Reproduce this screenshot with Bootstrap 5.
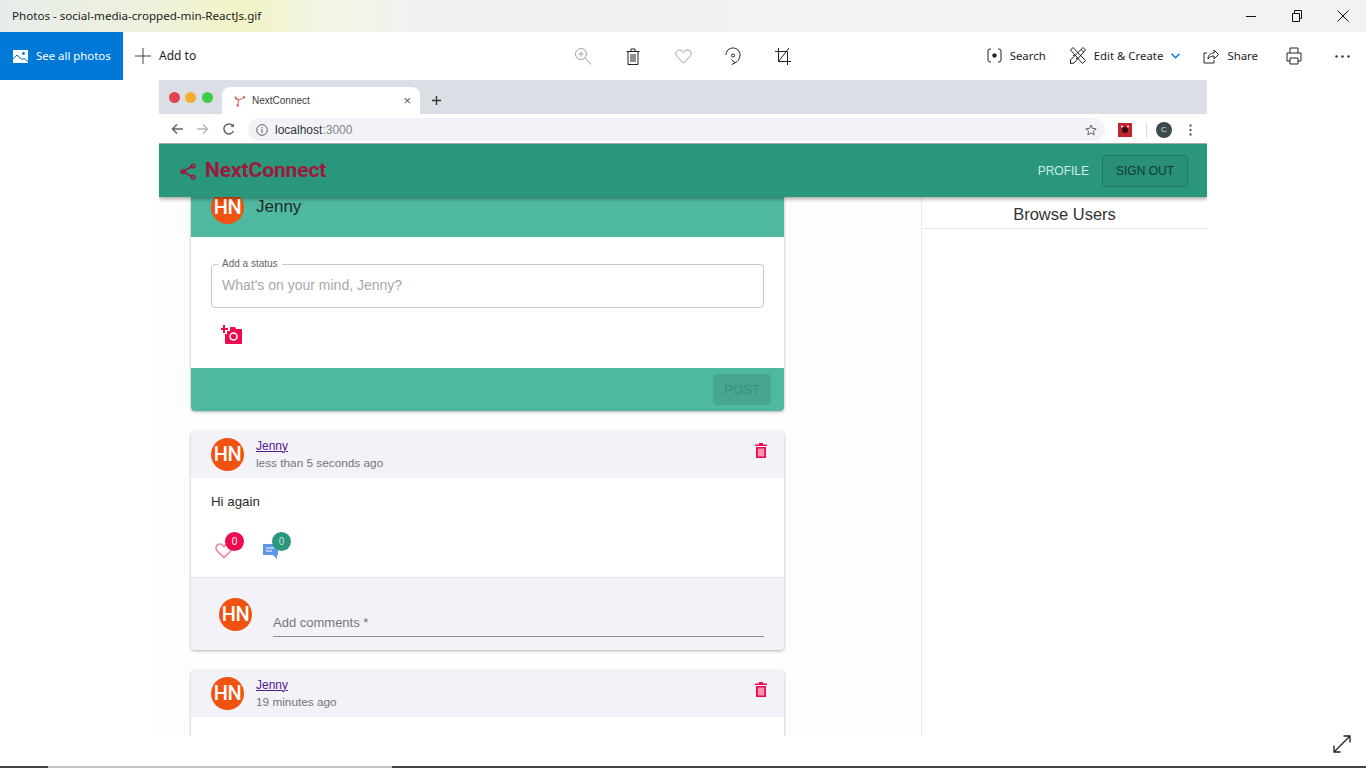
<!DOCTYPE html>
<html lang="en">
<head>
<meta charset="utf-8">
<title>Photos - social-media-cropped-min-ReactJs.gif</title>
<link href="https://cdn.jsdelivr.net/npm/bootstrap@5.3.0/dist/css/bootstrap.min.css" rel="stylesheet">
<style>
html,body{height:100%;overflow:hidden;background:#fff}
.app-shell{height:768px;width:1366px;font-family:"Noto Sans","Open Sans",sans-serif;color:#1c1c1c}
.title-strip{height:32px;background:linear-gradient(90deg,#e6ecea 0,#eef1dc 150px,#f2f4c6 245px,#f3f4e4 320px,#f1f1f1 420px,#f2f2f2 100%);font-size:11.6px;padding-left:12px}
.win-btn{width:46px;height:32px;display:flex;align-items:center;justify-content:center}
.tool-strip{height:48px;font-size:11.4px}
.tool-side{flex:1 1 0;min-width:0}
.see-all{width:123px;height:48px;background:#0078d7;color:#fff;padding-left:13px;gap:8px}
.add-to{margin-left:12px;gap:8px;font-size:12px}
.tool-cell{width:50px;height:48px;display:flex;align-items:center;justify-content:center}
.r-search{gap:8px;margin-right:24px}
.r-edit{gap:8px;margin-right:23px}
.r-share{gap:8px;margin-right:28px}
.r-print{margin-right:33px}
.r-dots{margin-right:16px}
.stage{height:656px;padding-left:159px}
.browser{width:1048px;height:656px;overflow:hidden;font-family:"Liberation Sans",Arial,sans-serif;background:#fdfdfd}
.tab-strip{height:34px;background:#dcdee6;padding:7px 0 0 10px}
.traffic{width:11px;height:11px;border-radius:50%;margin-top:5px}
.t-red{background:#e0444f}.t-yellow{background:#f2ae32;margin-left:5px}.t-green{background:#3fce4c;margin-left:6px}
.chrome-tab{width:198px;height:27px;background:#fff;border-radius:8px 8px 0 0;margin-left:9px;padding:0 9px 0 12px;font-size:10px;color:#3c4043;gap:7px}
.tab-close{margin-left:auto;font-size:13px;line-height:1;color:#555}
.tab-plus{margin-left:11px}
.url-strip{height:30px;background:#fff;border-bottom:1px solid #a9b0b0;padding:4px 0 2px 12px}
.url-icons{gap:14px;width:77px;padding-top:5px}
.omni{width:857px;height:23px;background:#f2f3f8;border-radius:12px;font-size:12px;padding:0 8px;color:#80868b;gap:7px}
.omni b{font-weight:400;color:#30363a}
.url-end{margin-left:13px;padding-top:4px}
.ext-sep{width:1px;height:16px;background:#dcdcdc;margin:0 9px 0 14px}
.c-avatar{width:16px;height:16px;border-radius:50%;background:#3c4a4e;color:#ddd;font-size:8px;line-height:16px;text-align:center;margin-right:17px}
.site-nav{height:53px;background:#2a967c;position:relative;z-index:2;box-shadow:0 2px 4px rgba(0,0,0,.35);padding:0 19px 0 21px}
.brand-mark{font-family:Roboto,"Liberation Sans",sans-serif;font-weight:700;font-size:21px;color:#9c1a3c;gap:9px;letter-spacing:-.1px;padding-top:1px}
.nav-link-a{font-size:12px;color:#c9efe2;margin-right:13px;padding-top:1px}
.sign-out{width:86px;height:32px;border:1px solid #1f7a64;border-radius:4px;background:#2a8f77;color:#123a33;font-size:12px;padding:1px 0 0;font-family:inherit;--bs-btn-hover-bg:#2a8f77}
.content-row{margin-top:-20px;flex:1 1 0;min-height:0}
.feed{width:762px;padding-left:32px;overflow:hidden}
.side-col{width:286px;border-left:1px solid #ebebeb;padding-top:20px;background:#fff}
.side-head{height:32px;font-size:16.500px;color:#333;border-bottom:1px solid #e4e4e4;line-height:35px;text-align:center}
.post-box{width:593px;margin-bottom:20px;border:0;border-radius:4px;box-shadow:0 1px 3px rgba(0,0,0,.3);background:#fff}
.top-head{height:60px;background:#4fb9a0;padding:0 20px;gap:12px;font-size:17px;color:#1d2a28}
.top-body{height:131px;padding:27px 20px 0}
.status-box{height:44px;border:1px solid #c6c6c6;border-radius:4px;position:relative;padding:0 10px 2px;font-size:14px;color:#a9a9a9}
.status-label{position:absolute;left:6px;top:-7px;font-size:10px;line-height:12px;background:#fff;padding:0 4px;color:#666}
.cam-wrap{margin:14px 0 0 10px;height:22px}
.top-foot{height:43px;background:#4fb9a0;border-radius:0 0 4px 4px;padding:6px 13px 6px 0}
.post-btn{width:58px;height:31px;background:#46a68f;border:0;border-radius:4px;color:#3d8f7c;font-size:13px;padding:0;font-family:inherit}
.post-head{height:47px;background:#f3f2f8;padding:0 17px 0 20px;gap:12px;border-radius:4px 4px 0 0}
.who{line-height:17px;font-size:11.800px;color:#757575}
.who a{color:#551a8b;font-size:12px;display:block}
.hn-avatar{width:33px;height:33px;border-radius:50%;background:#f0520f;color:#fff;font-family:Roboto,sans-serif;font-weight:500;font-size:20px;line-height:33px;text-align:center;letter-spacing:-.5px;flex:none}
.bin-ic{margin-top:-8px}
.post-body{padding:15px 20px 0;font-size:13.3px;color:#2b2b2b;height:99px}
.post-body p{margin:0;line-height:17px}
.react-row{margin:30px 0 0 4px;gap:27px}
.react-item{position:relative;width:20px;height:19px}
.count-pill{position:absolute;right:-9px;top:-8px;width:19px;height:19px;border-radius:50%;color:#fff;font-size:10px;line-height:19px;text-align:center;padding:0}
.pill-red{background:#ee0a4f}.pill-teal{background:#2a967c;color:#bfe6da;right:-9px}
.comment-zone{height:73px;background:#f3f2f8;border-top:1px solid #e4e3ea;padding:20px 20px 0 28px;gap:21px;border-radius:0 0 4px 4px}
.comment-input{flex:1 1 0;height:39px;border-bottom:1px solid #8d8d93;font-size:13px;color:#777;padding-top:15px;line-height:20px}
.progress-foot{height:30px;padding-right:15px}
.expand-ic{margin-top:-1px}
.seek-line{height:2px}
.seek-a{width:48px;background:#444}.seek-b{width:344px;background:#c4c4c4}.seek-c{flex:1 1 0;background:#444}
</style>
</head>
<body>
<div class="app-shell d-flex flex-column">
  <div class="title-strip d-flex align-items-center justify-content-between">
    <span>Photos - social-media-cropped-min-ReactJs.gif</span>
    <div class="d-flex">
      <div class="win-btn"><svg width="12" height="12" viewBox="0 0 12 12"><path d="M1 6.5h10" stroke="#111" fill="none"/></svg></div>
      <div class="win-btn"><svg width="12" height="12" viewBox="0 0 12 12"><path d="M1.5 3.5h7v8h-7zM3.5 3.5v-3h7v8h-2" stroke="#111" fill="none"/></svg></div>
      <div class="win-btn"><svg width="12" height="12" viewBox="0 0 12 12"><path d="M.5.5l11 11M11.5.5l-11 11" stroke="#111" fill="none"/></svg></div>
    </div>
  </div>
  <div class="tool-strip d-flex">
    <div class="tool-side d-flex align-items-center">
      <div class="see-all d-flex align-items-center"><svg width="15" height="15" viewBox="0 0 15 15"><path fill="#fff" d="M0 1h15v13H0z"/><circle cx="10.5" cy="4.5" r="1.4" fill="#0078d7"/><path d="M0 10l4-4 5 4.5 2-1 4 3" fill="none" stroke="#0078d7"/></svg><span>See all photos</span></div>
      <div class="add-to d-flex align-items-center"><svg width="16" height="16" viewBox="0 0 16 16"><path d="M8 0v16M0 8h16" stroke="#444" fill="none"/></svg><span>Add to</span></div>
    </div>
    <div class="d-flex">
      <div class="tool-cell"><svg width="18" height="18" viewBox="0 0 18 18" fill="none" stroke="#a5a5a5"><circle cx="7" cy="7" r="5.5"/><path d="M7 4.5v5M4.5 7h5M11 11l6 6.5"/></svg></div>
      <div class="tool-cell"><svg width="14" height="17" viewBox="0 0 14 17" fill="none" stroke="#222"><path d="M.5 3.5h13M5 3V1h4v2M2 3.5v13h10v-13M5 6v8M7 6v8M9 6v8"/></svg></div>
      <div class="tool-cell"><svg width="17" height="15" viewBox="0 0 17 15" fill="none" stroke="#9a9a9a"><path d="M8.500 14L1.800 7.300C-.4 4.800 1.200 1 4.500 1c1.800 0 3.100 1 4 2.500C9.400 2 10.700 1 12.500 1c3.300 0 4.900 3.800 2.700 6.300z"/></svg></div>
      <div class="tool-cell"><svg width="16" height="18" viewBox="0 0 16 18" fill="none" stroke="#222"><path d="M1 8C1 4 4 1 8 1s7 3 7 7-2 6.500-5.500 8"/><path d="M6.500 12.500l3.500 3.300-3.300 1.800"/><circle cx="8" cy="8.500" r="1.500"/></svg></div>
      <div class="tool-cell"><svg width="16" height="18" viewBox="0 0 16 18" fill="none" stroke="#222"><path d="M3.500 1v13.500H16M0 4.500h12.500V18M14 1L3.500 14.500"/></svg></div>
    </div>
    <div class="tool-side d-flex align-items-center justify-content-end">
      <div class="r-search d-flex align-items-center"><svg width="15" height="15" viewBox="0 0 15 15" fill="none" stroke="#222"><path d="M4 1H3Q1 1 1 3v9q0 2 2 2h1M11 1h1q2 0 2 2v9q0 2-2 2h-1"/><circle cx="7.500" cy="7.500" r="1.800" fill="#222"/></svg><span>Search</span></div>
      <div class="r-edit d-flex align-items-center"><svg width="16" height="17" viewBox="0 0 16 17" fill="none" stroke="#222"><path d="M3 .5L.5 3l12 13.500 3-3zM13 .5L.5 13l-.0 3.500 3.500-.5L15.500 3zM11 2.500l2.500 2.500M3 9l2-2M6 12l2-2"/></svg><span>Edit &amp; Create</span><svg width="9" height="6" viewBox="0 0 9 6" fill="none" stroke="#0078d7" stroke-width="1.500"><path d="M.500.800l4 4 4-4"/></svg></div>
      <div class="r-share d-flex align-items-center"><svg width="16" height="16" viewBox="0 0 16 16" fill="none" stroke="#222"><path d="M4 5H1v10h10v-3M5 11c0-4 2.500-6 6-6V2l4.500 4.500L11 11V8c-3 0-5 1-6 3z"/></svg><span>Share</span></div>
      <div class="r-print d-flex"><svg width="16" height="18" viewBox="0 0 16 18" fill="none" stroke="#222"><path d="M4 6V1h8v5M4 14H1V6h14v8h-3M4 11h8v6H4z"/></svg></div>
      <div class="r-dots d-flex"><svg width="15" height="3" viewBox="0 0 15 3" fill="#333"><circle cx="1.500" cy="1.500" r="1.200"/><circle cx="7.500" cy="1.500" r="1.200"/><circle cx="13.500" cy="1.500" r="1.200"/></svg></div>
    </div>
  </div>
  <div class="stage">
    <div class="browser d-flex flex-column">
      <div class="tab-strip d-flex align-items-start">
        <span class="traffic t-red"></span><span class="traffic t-yellow"></span><span class="traffic t-green"></span>
        <div class="chrome-tab d-flex align-items-center">
          <svg width="11" height="12" viewBox="0 0 12 12" fill="none" stroke="#d9605a" stroke-width="1.100"><path d="M1 1l4 4 6-3M5 5l-1 6M5 5L1 3"/><circle cx="4" cy="11" r=".8" fill="#d9605a"/><circle cx="11" cy="2" r=".8" fill="#d9605a"/></svg>
          <span>NextConnect</span><span class="tab-close">×</span>
        </div>
        <svg class="tab-plus mt-2" width="11" height="11" viewBox="0 0 11 11"><path d="M5.500 1v9M1 5.500h9" stroke="#333" stroke-width="1.400" fill="none"/></svg>
      </div>
      <div class="url-strip d-flex align-items-start">
        <div class="url-icons d-flex align-items-center">
          <svg width="12" height="12" viewBox="0 0 12 12" fill="none" stroke="#5f6368" stroke-width="1.500"><path d="M12 6H1.500M6 1.500L1.500 6 6 10.500"/></svg>
          <svg width="12" height="12" viewBox="0 0 12 12" fill="none" stroke="#b4b6b8" stroke-width="1.500"><path d="M0 6h10.500M6 1.500L10.500 6 6 10.500"/></svg>
          <svg width="12" height="12" viewBox="0 0 12 12" fill="none" stroke="#5f6368" stroke-width="1.500"><path d="M10.500 8A5 5 0 1 1 10 3"/><path d="M11 .5V4H7.500" fill="#5f6368" stroke="none"/></svg>
        </div>
        <div class="omni d-flex align-items-center">
          <svg width="12" height="12" viewBox="0 0 12 12" fill="none" stroke="#5f6368"><circle cx="6" cy="6" r="5.300"/><path d="M6 5v4M6 3v1.200"/></svg>
          <span><b>localhost</b>:3000</span>
          <svg class="ms-auto" width="12" height="12" viewBox="0 0 12 12" fill="none" stroke="#5f6368"><path d="M6 1l1.500 3.400 3.700.4-2.800 2.400.8 3.600L6 9l-3.200 1.800.8-3.600L.8 4.800l3.700-.4z"/></svg>
        </div>
        <div class="url-end d-flex align-items-center">
          <svg width="14" height="14" viewBox="0 0 14 14"><path fill="#c2232f" d="M0 0h14v14H0z"/><circle cx="7" cy="7" r="3" fill="#2b1517"/><circle cx="4" cy="3.500" r="1" fill="#fff"/><circle cx="10" cy="3.500" r="1" fill="#fff"/></svg>
          <span class="ext-sep"></span>
          <span class="c-avatar">C</span>
          <svg width="3" height="12" viewBox="0 0 3 12" fill="#5f6368"><circle cx="1.500" cy="1.500" r="1.200"/><circle cx="1.500" cy="6" r="1.200"/><circle cx="1.500" cy="10.500" r="1.200"/></svg>
        </div>
      </div>
      <nav class="site-nav d-flex align-items-center justify-content-between">
        <div class="brand-mark d-flex align-items-center">
          <svg width="16" height="17" viewBox="0 0 16 17" fill="none" stroke="#9c1a3c" stroke-width="1.600"><path d="M12.500 3L3 8.500l9.500 5.500"/><circle cx="13" cy="3" r="1.800"/><circle cx="3" cy="8.500" r="1.800"/><circle cx="13" cy="14" r="1.800"/></svg>
          <span>NextConnect</span>
        </div>
        <div class="d-flex align-items-center">
          <span class="nav-link-a">PROFILE</span>
          <button class="btn sign-out" type="button">SIGN OUT</button>
        </div>
      </nav>
      <div class="content-row d-flex">
        <div class="feed">
          <div class="card post-box">
            <div class="top-head d-flex align-items-center"><div class="hn-avatar">HN</div><span>Jenny</span></div>
            <div class="top-body">
              <div class="status-box d-flex align-items-center"><span class="status-label">Add a status</span>What's on your mind, Jenny?</div>
              <div class="cam-wrap"><svg width="21" height="20" viewBox="0 0 21 20"><path fill="#ee0a4f" d="M2 0h2v3h3v2H4v3H2V5H0V3h2zM9 2h5l1 2h5q1 0 1 1v13q0 1-1 1H5q-1 0-1-1V9h2V6h3z"/><circle cx="12.500" cy="11.500" r="3.500" fill="none" stroke="#fff" stroke-width="1.500"/></svg></div>
            </div>
            <div class="top-foot d-flex justify-content-end"><button class="btn post-btn" type="button">POST</button></div>
          </div>
          <div class="card post-box">
            <div class="post-head d-flex align-items-center">
              <div class="hn-avatar">HN</div>
              <div class="who flex-grow-1"><a href="#">Jenny</a><span>less than 5 seconds ago</span></div>
              <svg class="bin-ic" width="12" height="15" viewBox="0 0 12 15"><path fill="#ee0a4f" d="M4 0h4v1.500h4V3H0V1.500h4zM1 4h10v11H1z"/><path fill="#f593b3" d="M2.800 5.500h6.400v8H2.800z"/></svg>
            </div>
            <div class="post-body">
              <p>Hi again</p>
              <div class="react-row d-flex">
                <div class="react-item"><svg width="18" height="17" viewBox="0 0 18 17" fill="none" stroke="#ef7fa3" stroke-width="1.500"><path d="M9 15.500L2 8.700C-.2 6.200 1.300 2 4.800 2 6.700 2 8 3 9 4.600 10 3 11.300 2 13.200 2c3.500 0 5 4.200 2.800 6.700z"/></svg><span class="count-pill pill-red">0</span></div>
                <div class="react-item"><svg width="17" height="17" viewBox="0 0 17 17"><path fill="#5f96e6" d="M1 2h15v11h-1v4l-4-4H1z"/><path d="M4 6h9M4 9h6" stroke="#fff" fill="none"/></svg><span class="count-pill pill-teal">0</span></div>
              </div>
            </div>
            <div class="comment-zone d-flex align-items-start">
              <div class="hn-avatar">HN</div>
              <div class="comment-input">Add comments *</div>
            </div>
          </div>
          <div class="card post-box">
            <div class="post-head d-flex align-items-center">
              <div class="hn-avatar">HN</div>
              <div class="who flex-grow-1"><a href="#">Jenny</a><span>19 minutes ago</span></div>
              <svg class="bin-ic" width="12" height="15" viewBox="0 0 12 15"><path fill="#ee0a4f" d="M4 0h4v1.500h4V3H0V1.500h4zM1 4h10v11H1z"/><path fill="#f593b3" d="M2.800 5.500h6.400v8H2.800z"/></svg>
            </div>
            <div class="post-body"><p>Hi</p></div>
          </div>
        </div>
        <aside class="side-col"><div class="side-head">Browse Users</div></aside>
      </div>
    </div>
  </div>
  <div class="progress-foot d-flex justify-content-end align-items-start">
    <svg class="expand-ic" width="18" height="18" viewBox="0 0 18 18" fill="none" stroke="#222" stroke-width="1.300"><path d="M1 17L17 1M10.500 1H17v6.500M1 10.500V17h6.500"/></svg>
  </div>
  <div class="seek-line d-flex"><span class="seek-a"></span><span class="seek-b"></span><span class="seek-c"></span></div>
</div>
<script src="https://cdn.jsdelivr.net/npm/bootstrap@5.3.0/dist/js/bootstrap.bundle.min.js"></script>
</body>
</html>
